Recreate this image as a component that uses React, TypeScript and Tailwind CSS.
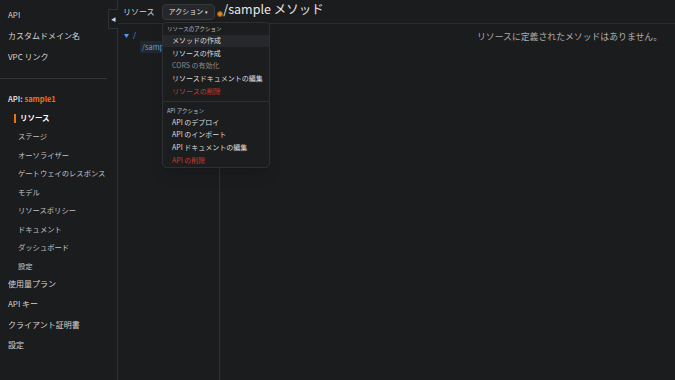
import React from 'react';

const font = { fontFamily: '"Noto Sans CJK JP", "Noto Sans", sans-serif' };

const apiSubItems = [
  'ステージ',
  'オーソライザー',
  'ゲートウェイのレスポンス',
  'モデル',
  'リソースポリシー',
  'ドキュメント',
  'ダッシュボード',
  '設定',
];

const bottomItems = ['使用量プラン', 'API キー', 'クライアント証明書', '設定'];

type MenuItem = { label: string; tone?: 'danger' | 'disabled'; active?: boolean };

const resourceActions: MenuItem[] = [
  { label: 'メソッドの作成', active: true },
  { label: 'リソースの作成' },
  { label: 'CORS の有効化', tone: 'disabled' },
  { label: 'リソースドキュメントの編集' },
  { label: 'リソースの削除', tone: 'danger' },
];

const apiActions: MenuItem[] = [
  { label: 'API のデプロイ' },
  { label: 'API のインポート' },
  { label: 'API ドキュメントの編集' },
  { label: 'API の削除', tone: 'danger' },
];

function MenuRow({ item }: { item: MenuItem }) {
  const color =
    item.tone === 'danger'
      ? 'text-[#c93a2e]'
      : item.tone === 'disabled'
        ? 'text-[#8a8a8a]'
        : 'text-[#dcdcdc]';
  return (
    <div
      className={`h-[12.6px] pl-[9px] flex items-center text-[7px] leading-none whitespace-nowrap ${color} ${
        item.active ? 'bg-[#27282b]' : ''
      }`}
    >
      {item.label}
    </div>
  );
}

function ActionsMenu() {
  return (
    <div className="absolute left-[162px] top-[22px] w-[108px] h-[146px] bg-[#1c1d1f] border border-[#2e2f32] rounded-sm shadow-lg">
      <div className="pt-[4px] px-[4px] text-[5.5px] text-[#bdbdbd] leading-none">リソースのアクション</div>
      <div className="mt-[2px]">
        {resourceActions.map(item => (
          <MenuRow key={item.label} item={item} />
        ))}
      </div>
      <div className="mt-[4px] border-t border-[#2e2f32]" />
      <div className="pt-[7px] px-[4px] text-[5.5px] text-[#bdbdbd] leading-none">API アクション</div>
      <div className="mt-[1px]">
        {apiActions.map(item => (
          <MenuRow key={item.label} item={item} />
        ))}
      </div>
    </div>
  );
}

export default function App() {
  return (
    <div
      className="relative w-[675px] h-[380px] bg-[#1b1c1e] text-[#d5d5d5] flex overflow-hidden"
      style={font}
    >
      {/* Sidebar */}
      <div className="w-[118px] shrink-0 border-r border-[#303134] flex flex-col">
        <div className="px-[8px] pt-[9px] flex flex-col gap-[9px] text-[8px] leading-[12px]">
          <div>API</div>
          <div>カスタムドメイン名</div>
          <div>VPC リンク</div>
        </div>
        <div className="mt-[15px] mr-[10px] border-t border-[#35363a]" />
        <div className="px-[8px] pt-[14px] text-[7.5px] leading-[12px] font-bold">
          API: <span className="text-[#ec7211]">sample1</span>
        </div>
        <div className="mt-[7px] pl-[14px] flex items-center text-[7.5px] leading-[12px] font-bold text-white">
          <span className="w-[2px] h-[9px] bg-[#ec7211] mr-[4px]" />
          リソース
        </div>
        <div className="pl-[18px] flex flex-col gap-[6.5px] mt-[6px] text-[7.3px] leading-[12px] text-[#c4c4c4]">
          {apiSubItems.map(item => (
            <div key={item}>{item}</div>
          ))}
        </div>
        <div className="px-[8px] mt-[6px] flex flex-col gap-[8.5px] text-[8px] leading-[12px]">
          {bottomItems.map(item => (
            <div key={item}>{item}</div>
          ))}
        </div>
      </div>

      {/* Collapse tab */}
      <div className="absolute left-[108px] top-[9px] w-[10px] h-[20px] bg-[#1b1c1e] border-l border-b border-t border-[#303134] flex items-center justify-center text-[5px] text-[#d5d5d5]">
        ◀
      </div>

      {/* Main */}
      <div className="flex-1 flex flex-col">
        <div className="h-[24px] shrink-0 border-b border-[#2a2b2e] flex items-center pl-[5px]">
          <span className="text-[8px] text-[#d5d5d5]">リソース</span>
          <div className="ml-[7px] h-[16px] px-[6px] flex items-center bg-[#26272a] border border-[#36373b] rounded-sm text-[7px] text-[#e0e0e0]">
            アクション<span className="ml-[2px] text-[5px]">▾</span>
          </div>
          <span className="ml-[2px] w-[6px] h-[6px] rounded-full bg-[#e08a1e] border border-[#8a5a1a] mt-[4px]" />
          <span className="ml-[0px] text-[12.5px] text-[#e6e6e6] leading-none -mt-[4px]">/sample メソッド</span>
        </div>
        <div className="flex-1 flex">
          <div className="w-[102px] shrink-0 border-r border-[#303134] pt-[6px] pl-[6px]">
            <div className="flex items-center text-[7.5px] text-[#539fe5] leading-[10px]">
              <span className="text-[5px] mr-[4px]">▼</span>/
            </div>
            <div className="ml-[16px] mt-[1px] h-[12px] w-[24px] bg-[#23272e] text-[7.5px] text-[#539fe5] leading-[12px] pl-[2px] whitespace-nowrap">
              /sample
            </div>
          </div>
          <div className="flex-1 flex justify-end pr-[13px] pt-[7px]">
            <span className="text-[8.85px] text-[#adadad] leading-[12px]">リソースに定義されたメソッドはありません。</span>
          </div>
        </div>
      </div>

      <ActionsMenu />
    </div>
  );
}
